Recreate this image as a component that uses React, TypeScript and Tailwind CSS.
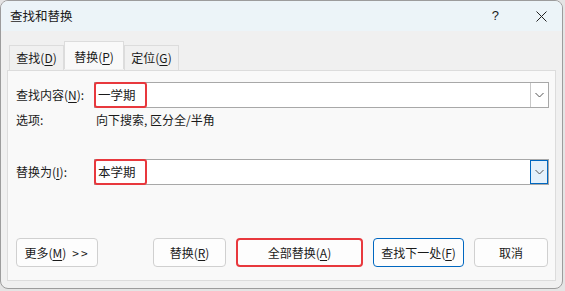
import React from 'react';

const font = { fontFamily: '"Noto Sans CJK SC", "Noto Sans", sans-serif' };

function Key({ children }: { children: React.ReactNode }) {
  return <span className="underline underline-offset-2">{children}</span>;
}

function Tab({ label, k, active }: { label: string; k: string; active?: boolean }) {
  if (active) {
    return (
      <div className="relative z-10 -mb-px flex h-[28px] w-[60px] -translate-y-[2px] items-center justify-center border border-b-0 border-[#dcdcdc] bg-[#f9f9f9] pt-[2px]">
        {label}(<Key>{k}</Key>)
      </div>
    );
  }
  return (
    <div className="flex h-[25px] w-[55px] items-center justify-center border border-b-0 border-[#dcdcdc] bg-[#f0f0f0]">
      {label}(<Key>{k}</Key>)
    </div>
  );
}

function Chevron() {
  return (
    <svg width="9" height="6" viewBox="0 0 9 6" className="text-[#555]">
      <path d="M0.5 1 L4.5 5 L8.5 1" fill="none" stroke="currentColor" strokeWidth="1" />
    </svg>
  );
}

function Combo({ value, focused }: { value: string; focused?: boolean }) {
  return (
    <div className="relative flex h-[26px] flex-1 items-stretch border border-[#a8a8a8] bg-white">
      <div className="flex flex-1 items-center pl-[3px] text-[12.5px]">{value}</div>
      <div
        className={
          focused
            ? 'flex w-[18px] items-center justify-center border border-[#0067c0] bg-[#e5f1fb]'
            : 'flex w-[18px] items-center justify-center border-l border-[#c8c8c8]'
        }
      >
        <Chevron />
      </div>
      <div className="pointer-events-none absolute -left-px -top-px h-[26px] w-[53px] rounded-[3px] border-2 border-[#e8383d]" />
    </div>
  );
}

function Btn({
  children,
  w,
  variant,
}: {
  children: React.ReactNode;
  w: string;
  variant?: 'red' | 'blue';
}) {
  const border =
    variant === 'red'
      ? 'border-2 border-[#e8383d]'
      : variant === 'blue'
        ? 'border border-[#0067c0]'
        : 'border border-[#d0d0d0]';
  return (
    <div className={`flex h-[29px] items-center justify-center rounded-[4px] bg-[#fdfdfd] ${border} ${w}`}>
      {children}
    </div>
  );
}

export default function App() {
  return (
    <div className="h-[291px] w-[565px] overflow-hidden bg-[#e4e4e4] text-[12px] text-[#1a1a1a]" style={font}>
      <div className="flex h-[289px] w-[563px] flex-col overflow-hidden rounded-lg border border-[#9c9c9c] bg-[#f0f0f0]">
        {/* title bar */}
        <div className="flex h-[30px] shrink-0 items-center bg-[#ecf4f8] pl-[9px]">
          <span className="text-[12.5px]">查找和替换</span>
          <span className="ml-auto mr-[37px] text-[13px]" style={{ fontFamily: '"Liberation Sans", sans-serif' }}>
            ?
          </span>
          <svg width="11" height="11" viewBox="0 0 11 11" className="mr-[15px]">
            <path d="M0.5 0.5 L10.5 10.5 M10.5 0.5 L0.5 10.5" stroke="#222" strokeWidth="1" />
          </svg>
        </div>

        {/* tabs */}
        <div className="flex items-end pl-[8px] pt-[12px]">
          <Tab label="查找" k="D" />
          <Tab label="替换" k="P" active />
          <Tab label="定位" k="G" />
        </div>

        {/* panel */}
        <div className="mx-[6px] flex h-[211px] flex-col border border-[#dcdcdc] bg-[#f9f9f9] pl-[8px] pr-[6px]">
          <div className="mt-[11px] flex items-center">
            <div className="w-[78px]">
              查找内容(<Key>N</Key>):
            </div>
            <Combo value="一学期" />
          </div>

          <div className="mt-[4px] flex h-[16px] items-center">
            <div className="w-[80px]">选项:</div>
            <div>向下搜索, 区分全/半角</div>
          </div>

          <div className="mt-[31px] flex items-center">
            <div className="w-[78px]">
              替换为(<Key>I</Key>):
            </div>
            <Combo value="本学期" focused />
          </div>

          <div className="mt-[53px] flex items-center">
            <Btn w="w-[82px]">
              更多(<Key>M</Key>)<span className="ml-[6px] tracking-[2px]">&gt;&gt;</span>
            </Btn>
            <div className="ml-[55px] flex gap-[10px]">
              <Btn w="w-[73px]">
                替换(<Key>R</Key>)
              </Btn>
              <Btn w="w-[127px]" variant="red">
                全部替换(<Key>A</Key>)
              </Btn>
              <Btn w="w-[91px]" variant="blue">
                查找下一处(<Key>F</Key>)
              </Btn>
              <Btn w="w-[74px]">取消</Btn>
            </div>
          </div>
        </div>
      </div>
    </div>
  );
}
